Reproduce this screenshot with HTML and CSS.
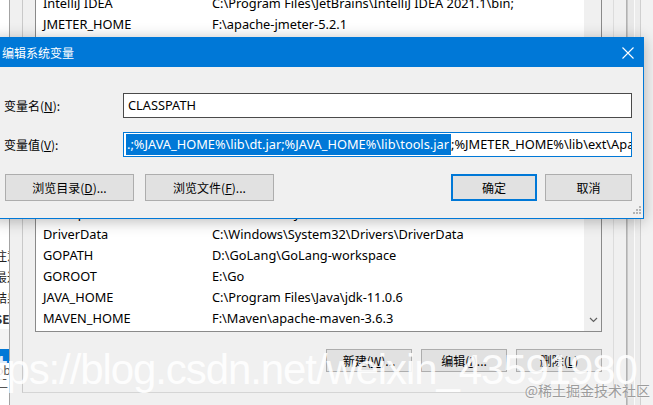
FILE: index.html
```html
<!DOCTYPE html>
<html lang="zh-CN">
<head>
<meta charset="utf-8">
<title>编辑系统变量</title>
<link rel="stylesheet" href="styles.css">
</head>
<body>
<div class="win">
  <div class="side">
    <div class="side-row">注意事项</div>
    <div class="side-row">最近使用</div>
    <div class="side-row">结果</div>
    <div class="side-row bold">USER</div>
    <div class="side-gap"></div>
    <div class="side-sel"></div>
    <div class="side-row small">ob</div>
    <div class="side-row small">二</div>
  </div>
  <div class="pane">
    <div class="group">
      <div class="list">
        <div class="rows">
          <div class="row"><span class="k">IntelliJ IDEA</span><span class="v">C:\Program Files\JetBrains\IntelliJ IDEA 2021.1\bin;</span></div>
          <div class="row"><span class="k">JMETER_HOME</span><span class="v">F:\apache-jmeter-5.2.1</span></div>
          <div class="row"><span class="k">OneDrive</span><span class="v">C:\Users\Administrator\OneDrive</span></div>
          <div class="row"><span class="k">Path</span><span class="v">C:\Users\Administrator\AppData\Local\Microsoft\WindowsApps;</span></div>
          <div class="row"><span class="k">TEMP</span><span class="v">C:\Users\Administrator\AppData\Local\Temp</span></div>
          <div class="row"><span class="k">TMP</span><span class="v">C:\Users\Administrator\AppData\Local\Temp</span></div>
          <div class="row"><span class="k"></span><span class="v"></span></div>
          <div class="row"><span class="k"></span><span class="v"></span></div>
          <div class="row"><span class="k">ACSetupSvcPort</span><span class="v">23210</span></div>
          <div class="row"><span class="k">CLASSPATH</span><span class="v">.;%JAVA_HOME%\lib\dt.jar;%JAVA_HOME%\lib\tools.jar;</span></div>
          <div class="row"><span class="k">ComSpec</span><span class="v">C:\Windows\system32\cmd.exe</span></div>
          <div class="row"><span class="k">DriverData</span><span class="v">C:\Windows\System32\Drivers\DriverData</span></div>
          <div class="row"><span class="k">GOPATH</span><span class="v">D:\GoLang\GoLang-workspace</span></div>
          <div class="row"><span class="k">GOROOT</span><span class="v">E:\Go</span></div>
          <div class="row"><span class="k">JAVA_HOME</span><span class="v">C:\Program Files\Java\jdk-11.0.6</span></div>
          <div class="row"><span class="k">MAVEN_HOME</span><span class="v">F:\Maven\apache-maven-3.6.3</span></div>
        </div>
        <div class="sb">
          <svg class="chev" width="9" height="6" viewBox="0 0 9 6"><path d="M1 1 L4.5 4.5 L8 1" fill="none" stroke="#606060" stroke-width="1.2"/></svg>
        </div>
      </div>
      <div class="obtns">
        <button class="obtn">新建(<u>W</u>)...</button>
        <button class="obtn">编辑(<u>I</u>)...</button>
        <button class="obtn">删除(<u>L</u>)</button>
      </div>
    </div>
  </div>
  <div class="edges">
    <div class="e1"></div><div class="e2"></div><div class="e3"></div><div class="e4"></div><div class="e5"></div><div class="e6"></div><div class="e7"></div>
  </div>
</div>

<div class="dlg">
  <div class="tbar">
    <span class="ttl">编辑系统变量</span>
    <svg class="close" width="12" height="12" viewBox="0 0 12 12"><path d="M0.5 0.5 L11.5 11.5 M11.5 0.5 L0.5 11.5" stroke="#ffffff" stroke-width="1.1" fill="none"/></svg>
  </div>
  <div class="dbody">
    <div class="frow">
      <span class="lbl">变量名(<u>N</u>):</span>
      <div class="inp">CLASSPATH</div>
    </div>
    <div class="frow">
      <span class="lbl">变量值(<u>V</u>):</span>
      <div class="inp focus"><span class="sel">.;%JAVA_HOME%\lib\dt.jar;%JAVA_HOME%\lib\tools.jar</span>;%JMETER_HOME%\lib\ext\ApacheJMeter_core.jar;%JMETER_HOME%\lib\jorphan.jar;</div>
    </div>
    <div class="brow">
      <button class="btn wide">浏览目录(<u>D</u>)...</button>
      <button class="btn wide">浏览文件(<u>F</u>)...</button>
      <span class="spacer"></span>
      <button class="btn def">确定</button>
      <button class="btn">取消</button>
    </div>
    <svg class="grip" width="10" height="10" viewBox="0 0 10 10">
      <rect x="7" y="1" width="2" height="2" fill="#b4b4b4"/>
      <rect x="4" y="4" width="2" height="2" fill="#b4b4b4"/>
      <rect x="7" y="4" width="2" height="2" fill="#b4b4b4"/>
      <rect x="1" y="7" width="2" height="2" fill="#b4b4b4"/>
      <rect x="4" y="7" width="2" height="2" fill="#b4b4b4"/>
      <rect x="7" y="7" width="2" height="2" fill="#b4b4b4"/>
    </svg>
  </div>
</div>

<div class="wm">https://blog.csdn.net/weixin_43591980</div>
<div class="wm2">@稀土掘金技术社区</div>
</body>
</html>
```

FILE: styles.css
```css
* { box-sizing: border-box; }
html, body { margin: 0; padding: 0; }
body {
  width: 653px;
  height: 405px;
  overflow: hidden;
  position: relative;
  background: #f0f0f0;
  font-family: "Noto Sans", "Noto Sans CJK SC", sans-serif;
  font-size: 12.8px;
  color: #000;
}
u { text-decoration: underline; text-underline-offset: 1px; }

.win { display: flex; height: 405px; }

/* left strip of the window behind */
.side {
  width: 10px;
  flex: none;
  background: #ffffff;
  border-right: 1px solid #a3a3a3;
  overflow: hidden;
  padding-top: 245px;
  display: flex;
  flex-direction: column;
  font-family: "Noto Sans CJK SC", sans-serif;
  font-size: 12px;
}
.side-row {
  height: 21px;
  line-height: 21px;
  white-space: nowrap;
  text-indent: -5px;
  color: #222;
}
.side-row.bold { font-weight: 700; text-indent: -14px; color: #333; }
.side-row.small { height: 13px; line-height: 13px; color: #555; text-indent: -4px; }
.side-gap { height: 20px; background: #f4f4f4; }
.side-sel { height: 14px; background: #0078d7; }

.pane { width: 604px; flex: none; padding-left: 12px; }
.group {
  height: 393px;
  border-left: 1px solid #c9c9c9;
  border-right: 1px solid #dcdcdc;
  border-bottom: 1px solid #d5d5d5;
  padding: 0 11px 0 12px;
  display: flex;
  flex-direction: column;
}
.list {
  margin-top: -8px;
  height: 340px;
  border: 1px solid #8a8a8a;
  display: flex;
  flex: none;
}
.rows {
  flex: 1;
  background: #fff;
  overflow: hidden;
}
.row {
  display: flex;
  height: 21px;
  line-height: 21px;
  padding-left: 7px;
  white-space: nowrap;
}
.k { width: 169px; flex: none; }
.v { flex: 1; overflow: hidden; }
.sb {
  width: 17px;
  flex: none;
  background: #f0f0f0;
  display: flex;
  flex-direction: column;
  justify-content: flex-end;
  align-items: center;
  padding-bottom: 8px;
}
.chev { display: block; margin-left: 1px; }

.obtns {
  display: flex;
  justify-content: flex-end;
  gap: 9px;
  margin-top: 17px;
}
.obtn {
  width: 86px;
  height: 23px;
  margin: 0;
  padding: 0;
  border: 1px solid #adadad;
  background: #e1e1e1;
  font-family: "Noto Sans CJK SC", sans-serif;
  font-size: 12px;
  color: #000;
}

.edges { flex: 1; display: flex; }
.e1 { width: 12px; background: #f0f0f0; }
.e2 { width: 2px; background: linear-gradient(90deg, #a6a6a6, #d2d2d2); }
.e3 { width: 6px; background: #e8e8e8; }
.e4 { width: 1px; background: #fbfbfb; }
.e5 { width: 5px; background: #ececec; }
.e6 { width: 1px; background: #cfcfcf; }
.e7 { flex: 1; background: #f2f2f2; }

/* dialog window floating over the desktop */
.dlg {
  position: absolute;
  left: -10px;
  top: 37px;
  width: 654px;
  height: 182px;
  border: 1px solid #0078d7;
  background: #f0f0f0;
  box-shadow: 0 2px 14px rgba(0, 0, 0, 0.28);
  display: flex;
  flex-direction: column;
}
.tbar {
  height: 29px;
  flex: none;
  background: #0078d7;
  display: flex;
  align-items: center;
  padding-left: 11px;
  padding-right: 8px;
}
.ttl {
  flex: 1;
  color: #fff;
  font-family: "Noto Sans CJK SC", sans-serif;
  font-size: 12px;
  line-height: 16px;
}
.close { display: block; margin-right: 1px; margin-top: 0; }

.dbody {
  position: relative;
  flex: 1;
  padding: 26px 11px 0 13px;
  display: flex;
  flex-direction: column;
}
.frow {
  display: flex;
  align-items: center;
  height: 25px;
  margin-bottom: 14px;
}
.frow + .frow { margin-bottom: 17px; }
.lbl {
  width: 119px;
  flex: none;
  font-family: "Noto Sans CJK SC", sans-serif;
  font-size: 12px;
}
.inp {
  flex: 1;
  height: 25px;
  border: 1px solid #4a4a4a;
  background: #fff;
  padding: 1px 0 1px 4px;
  line-height: 21px;
  white-space: nowrap;
  overflow: hidden;
}
.inp.focus { border-color: #0078d7; padding-left: 2px; }
.sel {
  display: inline-block;
  height: 21px;
  background: #0078d7;
  color: #fff;
  padding-left: 1px;
  padding-right: 2px;
}

.brow { display: flex; height: 27px; }
.btn {
  height: 27px;
  width: 87px;
  margin: 0;
  padding: 0;
  border: 1px solid #adadad;
  background: #e1e1e1;
  font-family: "Noto Sans CJK SC", sans-serif;
  font-size: 12px;
  color: #000;
}
.btn.wide { width: 129px; margin-left: 1px; margin-right: 10px; }
.btn.def { width: 86px; border: 2px solid #0078d7; margin-right: 8px; }
.spacer { flex: 1; }
.grip { position: absolute; right: 1px; bottom: 3px; }

/* watermarks */
.wm {
  position: absolute;
  left: -37px;
  top: 349px;
  font-family: "Liberation Sans", Arial, sans-serif;
  font-size: 42px;
  line-height: 42px;
  letter-spacing: -1.1px;
  color: rgba(255, 255, 255, 0.9);
  white-space: nowrap;
}
.wm2 {
  position: absolute;
  right: 3px;
  top: 381px;
  font-family: "Noto Sans CJK SC", sans-serif;
  font-size: 14px;
  line-height: 18px;
  color: #9c9c9c;
  text-shadow: 0 0 2px #fff;
  white-space: nowrap;
}
```
